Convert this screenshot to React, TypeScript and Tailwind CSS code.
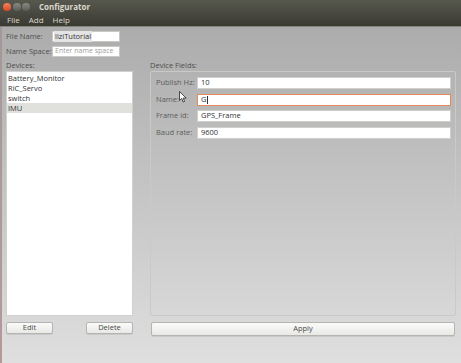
import React from "react";

const font = { fontFamily: '"Open Sans", "DejaVu Sans", sans-serif' };

function Btn({ label, className }: { label: string; className?: string }) {
  return (
    <div
      className={
        "flex items-center justify-center rounded-[2px] border border-[#b4b4b0] bg-gradient-to-b from-[#fbfbfa] to-[#e8e8e6] text-[7.5px] text-[#4a4a4a] shadow-[0_1px_0_rgba(0,0,0,0.08)] " +
        (className || "")
      }
    >
      {label}
    </div>
  );
}

function Field({ label, value, focus }: { label: string; value: string; focus?: boolean }) {
  return (
    <div className="flex h-[12px] items-center">
      <div className="w-[46px] shrink-0 pl-[5px] text-[7.5px] text-[#5c5c5c]">{label}</div>
      <div
        className={
          "flex h-[12px] flex-1 items-center bg-white pl-[3px] text-[7.5px] text-[#333] " +
          (focus ? "border border-[#e58a5e]" : "border border-[#cfcfcb]")
        }
      >
        {value}
        {focus && <span className="ml-[0.5px] inline-block h-[8px] w-[1px] bg-[#333]" />}
      </div>
    </div>
  );
}

export default function App() {
  return (
    <div className="relative flex h-[363px] w-[461px] flex-col overflow-hidden" style={font}>
      {/* title + menu */}
      <div className="flex h-[26px] flex-col bg-gradient-to-b from-[#57584d] to-[#3a3a33]">
        <div className="flex h-[13px] items-center">
          <div className="ml-[3px] flex items-center gap-[1.5px]">
            <div className="h-[8px] w-[8px] rounded-full bg-gradient-to-b from-[#f4805c] to-[#d9461c]" />
            <div className="h-[8px] w-[8px] rounded-full bg-gradient-to-b from-[#8a8a84] to-[#5c5c56]" />
            <div className="h-[8px] w-[8px] rounded-full bg-gradient-to-b from-[#8a8a84] to-[#5c5c56]" />
          </div>
          <div className="ml-[9px] text-[8px] font-bold text-[#dcd8ce]">Configurator</div>
        </div>
        <div className="flex h-[13px] items-center gap-[9px] pl-[7px] text-[8px] text-[#dcd8ce]">
          <span>Flie</span>
          <span>Add</span>
          <span>Help</span>
        </div>
      </div>
      <div className="h-[1px] bg-[#85857f]" />
      {/* content */}
      <div className="flex flex-1">
        <div className="w-[2px] bg-gradient-to-b from-[#a59898] to-[#b39a9a]" />
        <div className="flex flex-1 flex-col bg-gradient-to-b from-[#acacac] to-[#dfdfdf] pl-[4px] pr-[5px]">
          <div className="mt-[4px] flex h-[11px] items-center">
            <div className="w-[46px] text-[7.5px] text-[#4e4e4e]">File Name:</div>
            <div className="flex h-[11px] w-[68px] items-center border border-[#c8c8c4] bg-white pl-[1px] text-[7.5px] text-[#333]">
              <span className="bg-[#e4e4e4] px-[1px]">liziTutorial</span>
            </div>
          </div>
          <div className="mt-[4px] flex h-[11px] items-center">
            <div className="w-[46px] text-[7.5px] text-[#4e4e4e]">Name Space:</div>
            <div className="flex h-[11px] w-[68px] items-center overflow-hidden whitespace-nowrap border border-[#c8c8c4] bg-white pl-[2px] text-[7px] text-[#a0a0a0]">
              Enter name space
            </div>
          </div>
          <div className="mt-[2px] flex flex-1">
            {/* left */}
            <div className="flex w-[127px] flex-col">
              <div className="h-[12px] text-[7.5px] leading-[12px] text-[#4e4e4e]">Devices:</div>
              <div className="h-[245px] border border-[#d0d0cc] bg-white pt-[1px] text-[7.5px] text-[#333]">
                <div className="h-[10px] pl-[1px] leading-[10px]">Battery_Monitor</div>
                <div className="h-[10px] pl-[1px] leading-[10px]">RiC_Servo</div>
                <div className="h-[10px] pl-[1px] leading-[10px]">switch</div>
                <div className="h-[10px] bg-[#e0e0dd] pl-[1px] leading-[10px]">IMU</div>
              </div>
              <div className="mt-[6px] flex justify-between">
                <Btn label="Edit" className="h-[12px] w-[47px]" />
                <Btn label="Delete" className="h-[12px] w-[47px]" />
              </div>
            </div>
            {/* right */}
            <div className="ml-[17px] flex flex-1 flex-col">
              <div className="h-[12px] text-[7.5px] leading-[12px] text-[#4e4e4e]">Device Fields:</div>
              <div className="flex h-[245px] flex-col gap-[4.5px] rounded-[2px] border border-[#c9c9c6] pt-[5px] pr-[4px]">
                <Field label="Publish Hz:" value="10" />
                <Field label="Name:" value="G" focus />
                <Field label="Frame id:" value="GPS_Frame" />
                <Field label="Baud rate:" value="9600" />
              </div>
              <Btn label="Apply" className="mt-[6px] ml-[1px] mr-[1px] h-[14px]" />
            </div>
          </div>
        </div>
      </div>
      {/* mouse cursor */}
      <svg className="absolute left-[179px] top-[91px]" width="8" height="12" viewBox="0 0 8 12">
        <path d="M0.5 0.5 L0.5 9.5 L2.7 7.5 L4.2 11 L5.6 10.4 L4.2 7.1 L7.2 7.1 Z" fill="#fff" stroke="#222" strokeWidth="0.8" strokeLinejoin="round" />
      </svg>
    </div>
  );
}
